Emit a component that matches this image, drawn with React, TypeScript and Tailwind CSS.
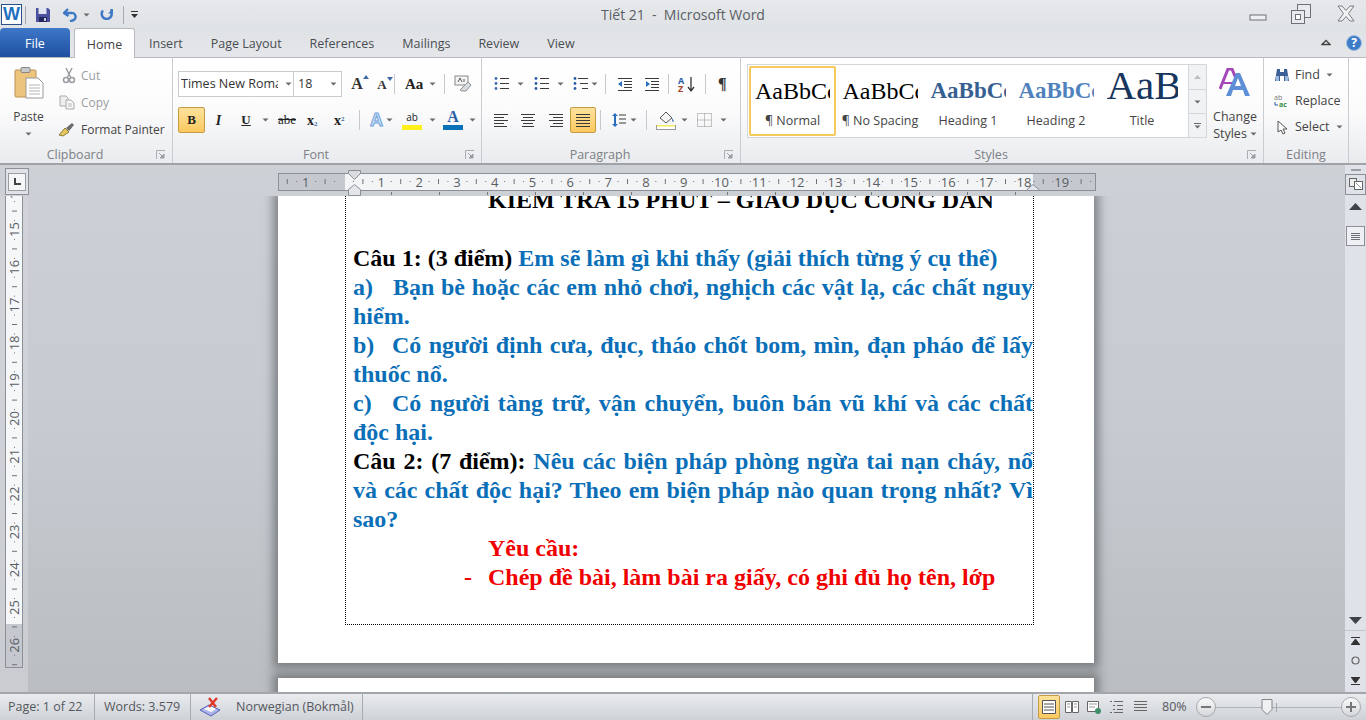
import { ReactNode } from "react";

function Caret({ className = "" }: { className?: string }) {
  return (
    <svg width="7" height="4" viewBox="0 0 7 4" className={className}>
      <path d="M0.5 0.5h6l-3 3z" fill="#6a6a6a" />
    </svg>
  );
}

function Launcher() {
  return (
    <svg width="10" height="10" viewBox="0 0 10 10">
      <path d="M0.5 9V0.5H9" fill="none" stroke="#a9adb2" />
      <path d="M3 3l4 4M8 4v4H4z" fill="#9a9ea3" stroke="#9a9ea3" />
    </svg>
  );
}

function Group({ w, label, launcher, children }: { w: string; label: string; launcher?: boolean; children: ReactNode }) {
  return (
    <div className={`${w} h-full flex flex-col border-r border-[#c9ccd1]`}>
      <div className="h-[86px] flex">{children}</div>
      <div className="h-[19px] pt-[3px] flex items-center text-[12.5px] text-[#7d8085]">
        <span className="flex-1 text-center">{label}</span>
        {launcher && (
          <div className="w-[22px] flex justify-center">
            <Launcher />
          </div>
        )}
      </div>
    </div>
  );
}

function Sep({ h = "h-[20px]" }: { h?: string }) {
  return <div className={`w-px ${h} bg-[#c6c9cd]`} />;
}

function Cell({ w, children, className = "" }: { w: string; children: ReactNode; className?: string }) {
  return <div className={`${w} h-full flex items-center justify-center shrink-0 ${className}`}>{children}</div>;
}

function WinControls() {
  return (
    <div className="flex items-start h-full">
      <svg width="18" height="8" viewBox="0 0 18 8" className="mt-[14px] mr-[23px]">
        <rect x="1" y="1" width="16" height="5" fill="#eef0f3" stroke="#6d7177" />
      </svg>
      <svg width="22" height="22" viewBox="0 0 22 22" className="mt-[3px] mr-[24px]">
        <rect x="7.5" y="1.5" width="13" height="13" fill="#e8eaed" stroke="#6d7177" />
        <rect x="1.5" y="7.5" width="13" height="13" fill="#e8eaed" stroke="#6d7177" />
        <rect x="5.5" y="11.5" width="5" height="5" fill="#fff" stroke="#6d7177" />
      </svg>
      <svg width="20" height="17" viewBox="0 0 20 17" className="mt-[5px] mr-[10px]">
        <path d="M2 1h4l4 4.5L14 1h4l-5.5 7.5L18 16h-4l-4-4.5L6 16H2l5.5-7.5z" fill="#f1f2f4" stroke="#777b81" strokeLinejoin="round" />
      </svg>
    </div>
  );
}

function TitleBar() {
  return (
    <div className="h-[29px] flex items-center justify-between bg-gradient-to-b from-[#e6e8eb] to-[#e0e3e6]">
      <div className="flex items-center h-full w-[450px]">
        <div className="ml-[1px] w-[21px] h-[21px] bg-white border border-[#2a4f8a] flex items-center justify-center text-[18px] font-bold text-[#1f6fc0] [font-family:'Liberation_Sans',sans-serif]">
          W
        </div>
        <div className="ml-[3px] w-px h-[18px] bg-[#a6a9ad]" />
        <svg width="16" height="16" viewBox="0 0 16 16" className="ml-[9px]">
          <path d="M1 1h12l2 2v12H1z" fill="#4a4f9e" />
          <rect x="3.5" y="1" width="8" height="6" fill="#dfe3f2" />
          <rect x="4" y="10" width="8" height="5" fill="#23265e" />
          <rect x="9" y="11" width="2" height="3" fill="#c9cde6" />
        </svg>
        <svg width="14" height="14" viewBox="0 0 14 14" className="ml-[12px]">
          <path d="M5 1L1 5l4.5 3" fill="none" stroke="#3d78c6" strokeWidth="2.4" />
          <path d="M1.5 5H8a3.6 3.6 0 0 1 1.5 7.5L7 13.5" fill="none" stroke="#3d78c6" strokeWidth="2.4" />
        </svg>
        <Caret className="ml-[6px]" />
        <svg width="15" height="14" viewBox="0 0 15 14" className="ml-[9px]">
          <path d="M4 2.5A5 5 0 1 0 12.5 4.5V1" fill="none" stroke="#3d78c6" strokeWidth="2.4" />
          <path d="M9 5.5l5 0L14 1z" fill="#3d78c6" />
        </svg>
        <div className="ml-[9px] w-px h-[18px] bg-[#a6a9ad]" />
        <svg width="7" height="7" viewBox="0 0 7 7" className="ml-[7px]">
          <rect x="0" y="0" width="7" height="1" fill="#333" />
          <path d="M0 3h7L3.5 7z" fill="#333" />
        </svg>
      </div>
      <div className="text-[14px] text-[#5a5e64] whitespace-pre">Tiết 21  -  Microsoft Word</div>
      <div className="w-[450px] flex justify-end h-full">
        <WinControls />
      </div>
    </div>
  );
}

function TabRow() {
  return (
    <div className="h-[29px] flex items-end bg-gradient-to-b from-[#e0e3e6] to-[#e4e6e9] border-b border-[#b6b9bd]">
      <div className="w-[70px] h-[29px] pt-[4px] rounded-t-[4px] bg-gradient-to-b from-[#3f78c9] to-[#1e4f9f] text-white text-[12.5px] flex items-center justify-center">File</div>
      <div className="ml-[4px] w-[61px] h-[30px] pt-[4px] -mb-px rounded-t-[3px] bg-white border border-b-0 border-[#b6b9bd] text-[12.5px] text-[#444] flex items-center justify-center">
        Home
      </div>
      <div className="flex h-[29px] pt-[4px] items-center text-[12.5px] text-[#4a4d52]">
        {["Insert", "Page Layout", "References", "Mailings", "Review", "View"].map((t) => (
          <div key={t} className="px-[14px]">{t}</div>
        ))}
      </div>
      <div className="ml-auto h-[29px] flex items-center mr-[4px]">
        <svg width="10" height="7" viewBox="0 0 10 7" className="mr-[15px]">
          <path d="M1 5.5L5 1.5l4 4z" fill="none" stroke="#444" strokeWidth="1.3" />
        </svg>
        <div className="w-[16px] h-[16px] rounded-full bg-[#3f7cc7] border border-[#9dbde3] text-white text-[12px] font-bold flex items-center justify-center">?</div>
      </div>
    </div>
  );
}

function Clipboard() {
  return (
    <Group w="w-[173px]" label="Clipboard" launcher>
      <div className="w-[57px] flex flex-col items-center pt-[9px]">
        <svg width="30" height="32" viewBox="0 0 30 32">
          <rect x="1" y="3" width="21" height="27" rx="1" fill="#edc47c" stroke="#b8935a" />
          <rect x="7" y="0.5" width="9" height="5" rx="1" fill="#c9c9c9" stroke="#888" />
          <path d="M12 11h12l5 5v15H12z" fill="#fff" stroke="#9a9a9a" />
          <path d="M15 18h11M15 21h11M15 24h11M15 27h11" stroke="#b5b5b5" />
        </svg>
        <div className="mt-[10px] text-[12px] text-[#444] leading-[16px]">Paste</div>
        <Caret className="mt-[7px]" />
      </div>
      <div className="flex flex-col pt-[4px] text-[12px]">
        <div className="h-[27px] flex items-center text-[#9b9ea2]">
          <svg width="16" height="17" viewBox="0 0 16 17" className="ml-[4px] mr-[4px]">
            <path d="M5 1l5 10M11 1L6 11" stroke="#9a9da1" strokeWidth="1.5" />
            <circle cx="5" cy="13" r="2.5" fill="none" stroke="#9a9da1" strokeWidth="1.5" />
            <circle cx="11" cy="13" r="2.5" fill="none" stroke="#9a9da1" strokeWidth="1.5" />
          </svg>
          Cut
        </div>
        <div className="h-[27px] flex items-center text-[#9b9ea2]">
          <svg width="16" height="15" viewBox="0 0 16 15" className="ml-[2px] mr-[6px]">
            <path d="M1 1h6l2 2v8H1z" fill="#eee" stroke="#aaa" />
            <path d="M7 5h5l3 3v6H7z" fill="#f6f6f6" stroke="#aaa" />
            <path d="M9 9h4M9 11h4" stroke="#bbb" />
          </svg>
          Copy
        </div>
        <div className="h-[27px] flex items-center text-[#444]">
          <svg width="17" height="15" viewBox="0 0 17 15" className="ml-[1px] mr-[6px]">
            <path d="M1 13l6-7 4 4-6 4z" fill="#e6c65f" stroke="#8a7a3a" />
            <path d="M8 6l6-5 2 2-5 6z" fill="#6a6a6a" />
          </svg>
          <span className="whitespace-nowrap">Format Painter</span>
        </div>
      </div>
    </Group>
  );
}

function FontA({ size, sup }: { size: string; sup: "up" | "down" }) {
  return (
    <div className={`relative font-bold text-[#333] ${size} [font-family:'Liberation_Serif',serif] leading-none`}>
      A
      <svg width="6" height="4" viewBox="0 0 6 4" className="absolute -top-[1px] -right-[6px]">
        <path d={sup === "up" ? "M0 4h6L3 0z" : "M0 0h6L3 4z"} fill="#3f68a8" />
      </svg>
    </div>
  );
}

function FontGroup() {
  const serif = "[font-family:'Liberation_Serif',serif] text-[#222]";
  return (
    <Group w="w-[309px]" label="Font" launcher>
      <div className="flex flex-col pl-[5px] pt-[13px]">
        <div className="h-[26px] flex items-center">
          <div className="w-[116px] h-[26px] border border-[#c8cbd0] bg-white flex items-center pl-[2px] text-[12.5px] text-[#333] overflow-hidden">
            <span className="w-[97px] overflow-hidden whitespace-nowrap">Times New Roman</span>
            <Caret className="ml-[7px]" />
          </div>
          <div className="w-[48px] h-[26px] border border-l-0 border-[#c8cbd0] bg-white flex items-center justify-between px-[4px] text-[12.5px] text-[#333]">
            18
            <Caret />
          </div>
          <Cell w="w-[26px]" className="ml-[2px]"><FontA size="text-[16px]" sup="up" /></Cell>
          <Cell w="w-[24px]"><FontA size="text-[13px]" sup="down" /></Cell>
          <Sep />
          <div className={`ml-[10px] text-[15px] font-bold ${serif}`}>Aa</div>
          <Caret className="ml-[6px]" />
          <div className="ml-[8px]"><Sep /></div>
          <svg width="18" height="18" viewBox="0 0 18 18" className="ml-[9px]">
            <rect x="1" y="1" width="13" height="9" fill="#f4f4f4" stroke="#888" />
            <path d="M4 7l2-4 2 4M10 4v3" fill="none" stroke="#555" />
            <path d="M6 15l8-8 3 3-5 6H8z" fill="#d8dbe0" stroke="#8a8d92" />
          </svg>
        </div>
        <div className="h-[26px] mt-[10px] flex items-center">
          <div className={`w-[27px] h-[26px] rounded-[2px] border border-[#c79a45] bg-gradient-to-b from-[#fde29a] to-[#fbc95f] flex items-center justify-center text-[13px] font-bold ${serif}`}>B</div>
          <Cell w="w-[27px]"><span className={`text-[14px] italic font-bold ${serif}`}>I</span></Cell>
          <Cell w="w-[28px]"><span className={`text-[13px] underline font-bold ${serif}`}>U</span></Cell>
          <Caret className="ml-[2px] mr-[9px]" />
          <span className={`text-[13px] line-through ${serif}`}>abe</span>
          <div className={`ml-[11px] w-[16px] text-[14px] font-bold ${serif}`}>x<sub className="text-[7px] text-[#3f68a8]">2</sub></div>
          <div className={`ml-[11px] w-[16px] text-[14px] font-bold ${serif}`}>x<sup className="text-[7px] text-[#3f68a8]">2</sup></div>
          <div className="ml-[9px]"><Sep /></div>
          <div className="ml-[10px] text-[18px] font-bold text-[#cfe0f3] [font-family:'Liberation_Sans',sans-serif] [-webkit-text-stroke:1px_#6fa3dc] leading-none">A</div>
          <Caret className="ml-[3px]" />
          <div className="ml-[9px] w-[20px] flex flex-col items-center">
            <span className="text-[10px] leading-[12px] text-[#222]">ab</span>
            <div className="w-[20px] h-[5px] bg-[#ffef1a] mt-[2px]" />
          </div>
          <Caret className="ml-[7px]" />
          <div className="ml-[7px] w-[20px] flex flex-col items-center">
            <span className="text-[16px] leading-[14px] font-bold text-[#2a5ea8] [font-family:'Liberation_Serif',serif]">A</span>
            <div className="w-[20px] h-[5px] bg-[#0a71b8] mt-[1px]" />
          </div>
          <Caret className="ml-[6px]" />
        </div>
      </div>
    </Group>
  );
}

function ParaIcon({ kind }: { kind: string }) {
  const line = "#3a3a3a";
  if (kind === "bullets" || kind === "numbers" || kind === "multi") {
    return (
      <svg width="16" height="14" viewBox="0 0 16 14">
        {[1, 6, 11].map((y, i) => (
          <g key={y}>
            <circle cx="2" cy={y + 0.5} r="1.4" fill={kind === "bullets" ? "#3d6fb0" : "#2a5ea8"} />
            <rect x={kind === "multi" ? 5 + i * 2 : 6} y={y} width={kind === "multi" ? 10 - i * 2 : 9} height="1" fill={line} />
          </g>
        ))}
      </svg>
    );
  }
  if (kind === "outdent" || kind === "indent") {
    return (
      <svg width="16" height="14" viewBox="0 0 16 14">
        {[1, 4, 7, 10, 13].map((y, i) => (
          <rect key={y} x={i === 0 || i === 4 ? 1 : 7} y={y} width={i === 0 || i === 4 ? 14 : 8} height="1" fill={line} />
        ))}
        <path d={kind === "outdent" ? "M1 7l4-3v6z" : "M6 7L2 4v6z"} fill="#2a6fc0" />
      </svg>
    );
  }
  if (kind === "sort") {
    return (
      <svg width="18" height="17" viewBox="0 0 18 17">
        <text x="0" y="7.5" fontSize="9" fontWeight="700" fill="#2a5ea8">A</text>
        <text x="0" y="16" fontSize="9" fontWeight="700" fill="#a8452a">Z</text>
        <path d="M13 1v13M10 11l3 4 3-4" fill="none" stroke="#333" strokeWidth="1.3" />
      </svg>
    );
  }
  const rows: Record<string, [number, number][]> = {
    left: [[0, 14], [0, 10], [0, 14], [0, 10], [0, 13]],
    center: [[0, 14], [2, 10], [0, 14], [2, 10], [1, 12]],
    right: [[0, 14], [4, 10], [0, 14], [4, 10], [1, 13]],
    justify: [[0, 14], [0, 14], [0, 14], [0, 14], [0, 14]],
  };
  return (
    <svg width="14" height="13" viewBox="0 0 14 13">
      {rows[kind].map(([x, w], i) => (
        <rect key={i} x={x} y={i * 3} width={w} height="1" fill={line} />
      ))}
    </svg>
  );
}

function Paragraph() {
  return (
    <Group w="w-[259px]" label="Paragraph" launcher>
      <div className="flex flex-col pl-[12px] pt-[13px]">
        <div className="h-[26px] flex items-center">
          <ParaIcon kind="bullets" />
          <Caret className="ml-[7px] mr-[10px]" />
          <ParaIcon kind="numbers" />
          <Caret className="ml-[7px] mr-[9px]" />
          <ParaIcon kind="multi" />
          <Caret className="ml-[2px] mr-[7px]" />
          <Sep />
          <div className="ml-[11px]"><ParaIcon kind="outdent" /></div>
          <div className="ml-[11px]"><ParaIcon kind="indent" /></div>
          <div className="ml-[8px]"><Sep /></div>
          <div className="ml-[9px]"><ParaIcon kind="sort" /></div>
          <div className="ml-[9px]"><Sep /></div>
          <div className="ml-[12px] text-[16px] font-bold leading-none text-[#333] [font-family:'Liberation_Serif',serif]">¶</div>
        </div>
        <div className="h-[26px] mt-[10px] flex items-center">
          <ParaIcon kind="left" />
          <div className="ml-[13px]"><ParaIcon kind="center" /></div>
          <div className="ml-[14px]"><ParaIcon kind="right" /></div>
          <div className="ml-[7px] w-[26px] h-[26px] rounded-[2px] border border-[#c79a45] bg-gradient-to-b from-[#fde29a] to-[#fbc95f] flex items-center justify-center">
            <ParaIcon kind="justify" />
          </div>
          <div className="ml-[4px]"><Sep /></div>
          <svg width="14" height="16" viewBox="0 0 14 16" className="ml-[11px]">
            <path d="M3 1l-3 3h2v8H0l3 3 3-3H4V4h2z" fill="#2a6fc0" />
            <path d="M7 3h7M7 7h7M7 11h7" stroke="#3a3a3a" />
          </svg>
          <Caret className="ml-[4px] mr-[9px]" />
          <Sep />
          <svg width="20" height="20" viewBox="0 0 20 20" className="ml-[9px]">
            <path d="M4 8l6-6 6 6-6 5z" fill="#f4f4f4" stroke="#555" />
            <path d="M16 8c2 2 2 4 1 4s-1-2-1-4z" fill="#4a78b5" />
            <rect x="0.5" y="15.5" width="19" height="4" fill="#fff" stroke="#9a9a9a" />
            <rect x="1" y="15" width="18" height="1.5" fill="#f1ea5a" />
          </svg>
          <Caret className="ml-[5px] mr-[9px]" />
          <svg width="15" height="14" viewBox="0 0 15 14">
            <path d="M.5.5h14v13H.5zM7.5.5v13M.5 7h14" fill="none" stroke="#8d8d8d" strokeDasharray="1 1" />
          </svg>
          <Caret className="ml-[8px]" />
        </div>
      </div>
    </Group>
  );
}

function StyleCell({ sample, label, className, w, clip, active }: { sample: string; label: string; className: string; w: string; clip: string; active?: boolean }) {
  return (
    <div className={`${w} h-[70px] flex flex-col items-center shrink-0 ${active ? "border-2 border-[#f5c95a] rounded-[2px]" : "border-2 border-transparent"}`}>
      <div className={`h-[42px] w-full overflow-hidden whitespace-nowrap flex items-center justify-center ${className}`}>
        <span className={`block overflow-hidden ${clip}`}>{sample}</span>
      </div>
      <div className="mt-[1px] text-[12.5px] leading-[20px] text-[#444] whitespace-nowrap">{label}</div>
    </div>
  );
}

function Styles() {
  const serif = "[font-family:'Liberation_Serif',serif]";
  return (
    <Group w="w-[523px]" label="Styles" launcher>
      <div className="ml-[6px] mt-[6px] w-[442px] h-[74px] border border-[#d3d6da] bg-white flex items-center pl-[1px]">
        <StyleCell w="w-[87px]" clip="w-[75px]" active sample="AaBbCc" label="¶ Normal" className={`${serif} pt-[4px] text-[24px] text-black`} />
        <StyleCell w="w-[88px]" clip="w-[75px]" sample="AaBbCc" label="¶ No Spacing" className={`${serif} pt-[4px] text-[24px] text-black`} />
        <StyleCell w="w-[88px]" clip="w-[75px]" sample="AaBbCc" label="Heading 1" className={`${serif} pt-[4px] text-[23px] font-bold text-[#365f91]`} />
        <StyleCell w="w-[88px]" clip="w-[75px]" sample="AaBbCc" label="Heading 2" className={`${serif} pt-[4px] text-[23px] font-bold text-[#4f81bd]`} />
        <StyleCell w="w-[84px]" clip="w-[71px]" sample="AaB" label="Title" className={`${serif} pb-[9px] text-[41px] leading-[44px] text-[#17365d]`} />
      </div>
      <div className="mt-[6px] w-[18px] h-[74px] flex flex-col border border-l-0 border-[#d3d6da] bg-[#f1f2f4]">
        <div className="h-[25px] flex items-center justify-center border-b border-[#d3d6da]">
          <svg width="7" height="4" viewBox="0 0 7 4"><path d="M0 4h7L3.5 0z" fill="#bbbec2" /></svg>
        </div>
        <div className="h-[24px] flex items-center justify-center border-b border-[#d3d6da]"><Caret /></div>
        <div className="flex-1 flex flex-col gap-[1px] items-center justify-center">
          <div className="w-[7px] h-px bg-[#6a6a6a]" />
          <Caret />
        </div>
      </div>
      <div className="ml-[5px] w-[46px] flex flex-col items-center pt-[10px] text-[12.5px] text-[#444]">
        <svg width="32" height="30" viewBox="0 0 32 30">
          <path d="M1 21L9 1h4l5 12" fill="none" stroke="#a347b8" strokeWidth="3" />
          <path d="M4 15h9" stroke="#a347b8" strokeWidth="2" />
          <path d="M7 28L17 5h4l10 23h-5l-2-6H14l-2 6z" fill="#5d8fd6" />
          <path d="M16 18h6l-3-8z" fill="#fff" />
        </svg>
        <div className="mt-[10px] leading-[17px]">Change</div>
        <div className="leading-[17px] flex items-center">Styles <Caret className="ml-[3px]" /></div>
      </div>
    </Group>
  );
}

function Editing() {
  return (
    <Group w="w-[85px]" label="Editing">
      <div className="flex flex-col pl-[10px] pt-[4px] text-[12.5px] text-[#444]">
        <div className="h-[26px] flex items-center">
          <svg width="16" height="14" viewBox="0 0 16 14" className="mr-[5px]">
            <path d="M3 1h3v3h4V1h3l2 12h-5V8H6v5H1z" fill="#3d5f95" />
            <rect x="2" y="8" width="3" height="5" fill="#9bb8de" />
            <rect x="11" y="8" width="3" height="5" fill="#9bb8de" />
          </svg>
          Find <Caret className="ml-[6px]" />
        </div>
        <div className="h-[26px] flex items-center">
          <svg width="16" height="14" viewBox="0 0 16 14" className="mr-[5px]">
            <text x="0" y="6" fontSize="7" fill="#777">ab</text>
            <text x="5" y="13" fontSize="7" fontWeight="700" fill="#2f8f3f">ac</text>
            <path d="M1 8v3h3" fill="none" stroke="#2a5ea8" />
          </svg>
          Replace
        </div>
        <div className="h-[26px] flex items-center">
          <svg width="12" height="15" viewBox="0 0 12 15" className="ml-[3px] mr-[6px]">
            <path d="M1 1v11l3-2 2 4 2-1-2-4h4z" fill="#fff" stroke="#555" />
          </svg>
          Select <Caret className="ml-[6px]" />
        </div>
      </div>
    </Group>
  );
}

function Ribbon() {
  return (
    <div className="h-[107px] flex bg-gradient-to-b from-white via-[#fbfbfc] to-[#e9ebee] border-b-2 border-[#9fa3a8]">
      <Clipboard />
      <FontGroup />
      <Paragraph />
      <Styles />
      <Editing />
    </div>
  );
}

function HRuler() {
  const x0 = 65.5;
  const step = 37.8;
  const marks: ReactNode[] = [];
  for (let i = -2; i <= 20; i++) {
    const x = x0 + i * step;
    if (x > 4 && x < 816 && i !== 0) {
      marks.push(
        <text key={`n${i}`} x={x} y="18.5" textAnchor="middle" fontSize="13" fill="#5a5e64">{Math.abs(i)}</text>
      );
    }
    [0.25, 0.5, 0.75].forEach((f) => {
      const tx = x + f * step;
      if (tx < 4 || tx > 814) return;
      marks.push(
        f === 0.5 ? (
          <rect key={`t${i}${f}`} x={tx} y="11" width="1" height="5" fill="#6f7378" />
        ) : (
          <rect key={`t${i}${f}`} x={tx} y="13" width="1" height="1" fill="#6f7378" />
        )
      );
    });
  }
  const tabs = [113, 161, 209, 257, 305, 353, 401, 449, 497, 545, 593, 641, 689, 737];
  return (
    <svg width="820" height="29" viewBox="0 0 820 29" className="block">
      <rect x="0.5" y="5.5" width="817" height="17" fill="#c5c9cf" stroke="#8b9097" />
      <rect x="67" y="6" width="688" height="16" fill="#f3f4f5" />
      {marks}
      {tabs.map((x) => (
        <rect key={x} x={x} y="24" width="1" height="3" fill="#777" />
      ))}
      <path d="M70.5 2.5h12v3l-6 6-6-6z" fill="#d9dbde" stroke="#8b9097" />
      <path d="M76.5 16.5l6 5v6h-12v-6z" fill="#e3e5e8" stroke="#8b9097" />
      <path d="M755 16.5l6 5v1h-12v-1z" fill="#e3e5e8" stroke="#8b9097" />
    </svg>
  );
}

function VRuler() {
  const y0 = 33.5;
  const step = 37.8;
  const marks: ReactNode[] = [];
  for (let i = -1; i <= 11; i++) {
    const y = y0 + i * step;
    const n = 15 + i;
    marks.push(
      <text key={n} x="0" y="0" transform={`translate(13.5 ${y}) rotate(-90)`} textAnchor="middle" fontSize="13" fill="#5a5e64">{n}</text>
    );
    [0.25, 0.5, 0.75].forEach((f) => {
      const ty = y + f * step;
      marks.push(
        f === 0.5 ? (
          <rect key={`${n}${f}`} x="7" y={ty} width="5" height="1" fill="#6f7378" />
        ) : (
          <rect key={`${n}${f}`} x="9" y={ty} width="1" height="1" fill="#6f7378" />
        )
      );
    });
  }
  return (
    <svg width="18" height="472" viewBox="0 0 18 472" className="block">
      <rect x="0.5" y="-2" width="17" height="473.5" fill="#c5c9cf" stroke="#8b9097" />
      <rect x="1" y="0" width="16" height="428" fill="#f6f7f8" />
      {marks}
    </svg>
  );
}

function RightTop() {
  return (
    <div className="w-[21px] h-full bg-[#dfe3e9] flex flex-col items-center pt-[4px]">
      <div className="w-[10px] h-[2px] bg-[#9ba0a6]" />
      <div className="mt-[3px] w-[21px] h-[21px] border border-[#8d9197] flex items-center justify-center">
        <svg width="14" height="13" viewBox="0 0 14 13">
          <rect x="0.5" y="0.5" width="7" height="8" fill="#eee" stroke="#666" />
          <rect x="5.5" y="3.5" width="8" height="8" fill="#fff" stroke="#666" />
          <path d="M7 5l5 5" stroke="#999" />
        </svg>
      </div>
    </div>
  );
}

function Scrollbar() {
  return (
    <div className="w-[21px] h-full bg-[#dfe3e9] flex flex-col items-center">
      <svg width="13" height="7" viewBox="0 0 13 7" className="mt-[7px]">
        <path d="M0 7h13L6.5 0z" fill="#3f4349" />
      </svg>
      <div className="mt-[16px] w-[19px] h-[20px] border border-[#8d9197] bg-[#eef0f4] flex items-center justify-center">
        <svg width="9" height="7" viewBox="0 0 9 7"><path d="M0 .5h9M0 2.5h9M0 4.5h9M0 6.5h9" stroke="#6d7177" /></svg>
      </div>
      <svg width="13" height="7" viewBox="0 0 13 7" className="mt-auto">
        <path d="M0 0h13L6.5 7z" fill="#3f4349" />
      </svg>
      <div className="mt-[6px] w-full border-t border-[#c2c5cb] h-[62px] flex flex-col items-center justify-around pb-[1px]">
        <svg width="9" height="8" viewBox="0 0 9 8"><path d="M0 .5h9M0 8l4.5-6L9 8z" stroke="#333" fill="#333" /></svg>
        <svg width="9" height="9" viewBox="0 0 9 9"><circle cx="4.5" cy="4.5" r="3.5" fill="none" stroke="#666" strokeWidth="1.2" /></svg>
        <svg width="9" height="8" viewBox="0 0 9 8"><path d="M0 7.5h9M0 0l4.5 6L9 0z" stroke="#333" fill="#333" /></svg>
      </div>
    </div>
  );
}

const just = "[text-align:justify] [text-align-last:justify] whitespace-nowrap";
const blue = "text-[#0b6fb8]";

function Page() {
  return (
    <div className="w-[816px] h-[467px] bg-white shadow-[0_0_9px_5px_rgba(70,72,76,0.55)] shrink-0 overflow-hidden">
      <div className="ml-[67px] w-[689px] h-[429px] border border-t-0 border-dotted border-black pl-[7px] overflow-hidden">
        <div className="-mt-[10px] text-[24px] leading-[29px] font-bold text-black [font-family:'Liberation_Serif',serif]">
          <div className="pl-[135px] whitespace-nowrap">KIỂM TRA 15 PHÚT – GIÁO DỤC CÔNG DÂN</div>
          <div className="h-[29px]" />
          <div className="whitespace-nowrap">Câu 1: (3 điểm) <span className={blue}>Em sẽ làm gì khi thấy (giải thích từng ý cụ thể)</span></div>
          <div className={`${just} ${blue}`}><span className="inline-block w-[40px] [text-align-last:left]">a)</span>Bạn bè hoặc các em nhỏ chơi, nghịch các vật lạ, các chất nguy</div>
          <div className={blue}>hiểm.</div>
          <div className={`${just} ${blue}`}><span className="inline-block w-[39px] [text-align-last:left]">b)</span>Có người định cưa, đục, tháo chốt bom, mìn, đạn pháo để lấy</div>
          <div className={blue}>thuốc nổ.</div>
          <div className={`${just} ${blue}`}><span className="inline-block w-[39px] [text-align-last:left]">c)</span>Có người tàng trữ, vận chuyển, buôn bán vũ khí và các chất</div>
          <div className={blue}>độc hại.</div>
          <div className={just}>Câu 2: (7 điểm): <span className={blue}>Nêu các biện pháp phòng ngừa tai nạn cháy, nổ</span></div>
          <div className={`${just} ${blue}`}>và các chất độc hại? Theo em biện pháp nào quan trọng nhất? Vì</div>
          <div className={blue}>sao?</div>
          <div className="pl-[135px] text-[#f00000]">Yêu cầu:</div>
          <div className="pl-[111px] text-[#f00000] whitespace-nowrap"><span className="inline-block w-[24px]">-</span>Chép đề bài, làm bài ra giấy, có ghi đủ họ tên, lớp</div>
        </div>
      </div>
    </div>
  );
}

function WorkArea() {
  return (
    <div className="flex-1 min-h-0 flex flex-col bg-gradient-to-b from-[#cdd0d5] via-[#c6cbd2] to-[#babec0] border-b-2 border-[#a3a7ac]">
      <div className="h-[31px] flex shrink-0">
        <div className="w-[28px] pl-[5px] pt-[3px]">
          <div className="w-[24px] h-[27px] border border-[#8d9197] bg-[#dfe2e6] flex items-center justify-center">
            <div className="w-[18px] h-[18px] border border-[#9a9ea3] bg-[#f5f6f7] flex items-center justify-center">
              <div className="w-[7px] h-[7px] border-l-2 border-b-2 border-[#444]" />
            </div>
          </div>
        </div>
        <div className="ml-[250px] pt-[3px] w-[820px] relative z-10">
          <HRuler />
        </div>
        <div className="ml-auto"><RightTop /></div>
      </div>
      <div className="flex-1 min-h-0 flex">
        <div className="w-[28px] h-full pl-[5px] bg-[#d3d6da]/60">
          <VRuler />
        </div>
        <div className="flex-1 min-w-0 pl-[250px] flex flex-col overflow-hidden">
          <Page />
          <div className="mt-[15px] w-[816px] h-[20px] bg-white shrink-0 shadow-[0_0_9px_5px_rgba(70,72,76,0.55)]" />
        </div>
        <Scrollbar />
      </div>
    </div>
  );
}

function StatusBar() {
  const seg = "h-full flex items-center border-r border-[#a8abb0]";
  return (
    <div className="h-[26px] shrink-0 flex items-center bg-gradient-to-b from-[#e9ebee] to-[#ced2d7] text-[12.5px] text-[#55585d]">
      <div className={`${seg} w-[95px] pl-[8px]`}>Page: 1 of 22</div>
      <div className={`${seg} w-[96px] pl-[9px]`}>Words: 3.579</div>
      <div className={`${seg} w-[172px] pl-[8px]`}>
        <svg width="22" height="20" viewBox="0 0 22 20" className="mr-[15px]">
          <path d="M1 13l9-5 11 5-9 6z" fill="#aab4ea" stroke="#5a62b5" />
          <path d="M5 12l6-3 6 3-5 3z" fill="#fff" />
          <path d="M10 1l7 9M18 1l-8 9" stroke="#e0392b" strokeWidth="2.4" />
        </svg>
        Norwegian (Bokmål)
      </div>
      <div className="ml-auto h-full flex items-center">
        <div className="w-px h-full bg-[#a8abb0] mr-[5px]" />
        <div className="w-[22px] h-[24px] rounded-[2px] border border-[#c79a45] bg-gradient-to-b from-[#fde29a] to-[#fbc95f] flex items-center justify-center">
          <svg width="14" height="14" viewBox="0 0 14 14"><path d="M.5.5h13v13H.5z" fill="#fff" stroke="#555" /><path d="M2 4h10M2 7h10M2 10h10" stroke="#555" strokeWidth="1.2" /></svg>
        </div>
        <svg width="14" height="14" viewBox="0 0 14 14" className="ml-[5px]">
          <path d="M.5 1.5h6v11h-6zM7.5 1.5h6v11h-6z" fill="#fff" stroke="#666" />
          <path d="M2 4h3M2 7h3M9 4h3M9 7h3" stroke="#999" />
        </svg>
        <svg width="14" height="14" viewBox="0 0 14 14" className="ml-[8px]">
          <path d="M.5 1.5h11v10H.5z" fill="#fff" stroke="#666" />
          <path d="M2 4h8M2 7h6" stroke="#999" />
          <circle cx="11" cy="11" r="3" fill="#3f8f6a" />
        </svg>
        <svg width="14" height="14" viewBox="0 0 14 14" className="ml-[9px]">
          <path d="M0 1.5h2M4 1.5h9M3 5.5h2M7 5.5h6M3 9.5h2M7 9.5h6M0 12.5h2M4 12.5h9" stroke="#666" />
        </svg>
        <svg width="14" height="12" viewBox="0 0 14 12" className="ml-[10px]">
          <path d="M0 .5h13M0 3.5h13M0 6.5h13M0 9.5h13" stroke="#666" />
        </svg>
        <span className="ml-[14px] w-[25px]">80%</span>
        <div className="ml-[9px] w-[20px] h-[20px] rounded-full border border-[#a4a8ad] bg-gradient-to-b from-[#fafafa] to-[#d4d7da] flex items-center justify-center">
          <div className="w-[10px] h-[2px] bg-[#777]" />
        </div>
        <div className="w-[125px] h-px bg-[#b0b3b7] flex items-center">
          <svg width="12" height="16" viewBox="0 0 12 16" className="ml-[45px] shrink-0">
            <path d="M1 .5h10v10l-5 5-5-5z" fill="#eef0f2" stroke="#83878c" />
          </svg>
          <div className="ml-[3px] w-px h-[9px] bg-[#a4a8ad]" />
        </div>
        <div className="mr-[5px] w-[20px] h-[20px] rounded-full border border-[#a4a8ad] bg-gradient-to-b from-[#fafafa] to-[#d4d7da] flex items-center justify-center">
          <svg width="10" height="10" viewBox="0 0 10 10"><path d="M5 0v10M0 5h10" stroke="#777" strokeWidth="2" /></svg>
        </div>
      </div>
    </div>
  );
}

export default function App() {
  return (
    <div className="w-[1366px] h-[720px] overflow-hidden flex flex-col bg-white [font-family:'Open_Sans',sans-serif]">
      <TitleBar />
      <TabRow />
      <Ribbon />
      <WorkArea />
      <StatusBar />
    </div>
  );
}
